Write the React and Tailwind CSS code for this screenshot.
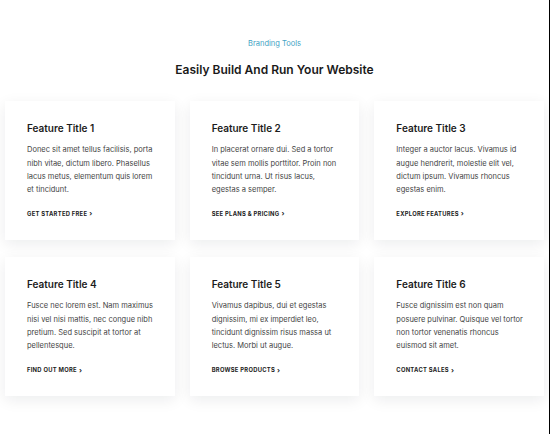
import React from 'react';

const features = [
  {
    title: 'Feature Title 1',
    body: 'Donec sit amet tellus facilisis, porta nibh vitae, dictum libero. Phasellus lacus metus, elementum quis lorem et tincidunt.',
    link: 'Get Started Free',
  },
  {
    title: 'Feature Title 2',
    body: 'In placerat ornare dui. Sed a tortor vitae sem mollis porttitor. Proin non tincidunt urna. Ut risus lacus, egestas a semper.',
    link: 'See Plans & Pricing',
  },
  {
    title: 'Feature Title 3',
    body: 'Integer a auctor lacus. Vivamus id augue hendrerit, molestie elit vel, dictum ipsum. Vivamus rhoncus egestas enim.',
    link: 'Explore Features',
  },
  {
    title: 'Feature Title 4',
    body: 'Fusce nec lorem est. Nam maximus nisi vel nisi mattis, nec congue nibh pretium. Sed suscipit at tortor at pellentesque.',
    link: 'Find Out More',
  },
  {
    title: 'Feature Title 5',
    body: 'Vivamus dapibus, dui et egestas dignissim, mi ex imperdiet leo, tincidunt dignissim risus massa ut lectus. Morbi ut augue.',
    link: 'Browse Products',
  },
  {
    title: 'Feature Title 6',
    body: 'Fusce dignissim est non quam posuere pulvinar. Quisque vel tortor non tortor venenatis rhoncus euismod sit amet.',
    link: 'Contact Sales',
  },
];

const FeatureCard = ({ title, body, link }) => (
  <div className="bg-white pl-[22px] pr-[18px] pt-[20px] pb-[18px] shadow-[0_4px_14px_rgba(15,23,42,0.08)]">
    <h3 className="text-[10px] font-semibold text-[#1c1c1c] leading-[14px]">{title}</h3>
    <p className="mt-[8px] text-[7.5px] leading-[13.3px] text-[#444]">{body}</p>
    <a href="#" className="mt-[13px] inline-flex items-center gap-[2px] text-[5.8px] font-bold uppercase tracking-[0.05em] text-[#1c1c1c]">
      {link}
      <span className="text-[7px]">›</span>
    </a>
  </div>
);

export default function App() {
  return (
    <div className="w-[550px] h-[434px] bg-white border-r border-black overflow-hidden font-['Inter',sans-serif]">
      <div className="pt-[38px] text-center">
        <p className="text-[7.5px] text-[#3fa3c4]">Branding Tools</p>
        <h2 className="mt-[12px] text-[12px] font-semibold text-[#1a1a1a]">Easily Build And Run Your Website</h2>
      </div>
      <div className="mt-[22px] px-[5px] grid grid-cols-3 gap-x-[15px] gap-y-[17px]">
        {features.map((f) => (
          <FeatureCard key={f.title} {...f} />
        ))}
      </div>
    </div>
  );
}
